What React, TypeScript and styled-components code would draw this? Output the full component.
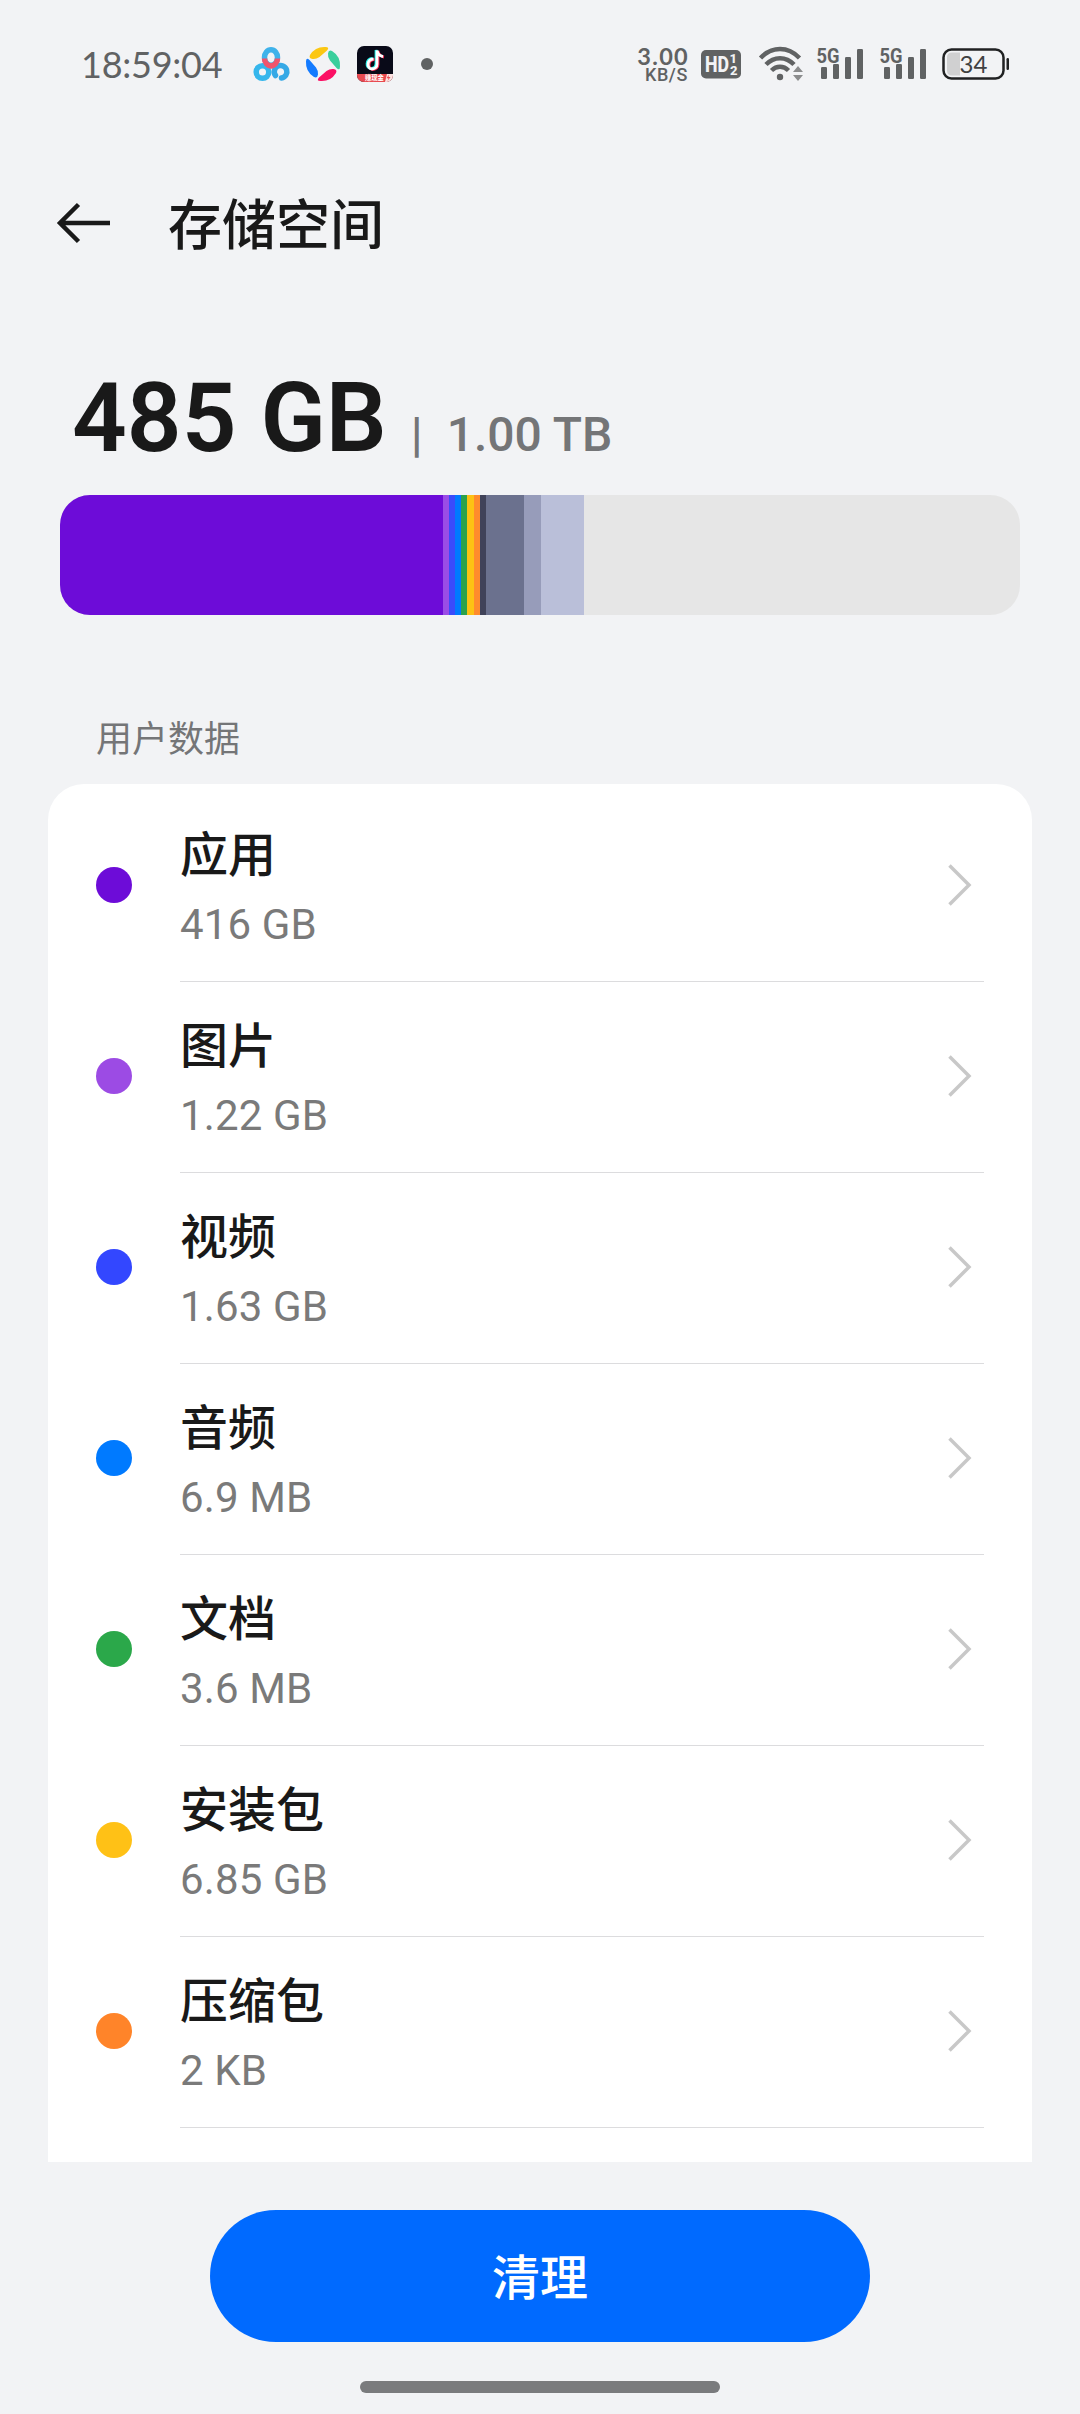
import React from "react";
import styled, { createGlobalStyle } from "styled-components";

const latin = `Roboto, "Noto Sans CJK SC", sans-serif`;

const GlobalStyle = createGlobalStyle`
  * { box-sizing: border-box; }
  body { margin: 0; background: #f2f3f5; font-family: ${latin}; color: #191919; }
`;

const Screen = styled.main`
  width: 1080px;
  height: 2414px;
  display: flex;
  flex-direction: column;
  background: #f2f3f5;
  overflow: hidden;
`;

const StatusBar = styled.header`
  height: 128px;
  flex: none;
  display: flex;
  justify-content: space-between;
  align-items: center;
  padding: 0 70px 0 81px;
`;

const StatusGroup = styled.div`
  display: flex;
  align-items: center;
`;

const Clock = styled.time`
  width: 172px;
  font: 400 36px/44px Lato, sans-serif;
  letter-spacing: -0.25px;
  color: #606263;
`;

const Glyph = styled.svg<{ $gap?: number }>`
  display: block;
  flex: none;
  margin-left: ${(p) => p.$gap ?? 0}px;
  overflow: visible;
`;

const Speed = styled.div`
  width: 52px;
  display: flex;
  flex-direction: column;
  align-items: flex-end;
  color: #606263;
`;

const SpeedValue = styled.span`
  font: 700 23.5px/20px Lato, sans-serif;
  letter-spacing: 1.3px;
`;

const SpeedUnit = styled.span`
  font: 500 18px/17px Roboto, sans-serif;
  letter-spacing: 0.6px;
  padding-right: 1px;
`;

const TitleBar = styled.div`
  height: 194px;
  flex: none;
  display: flex;
  align-items: flex-start;
  padding: 64px 0 0 57px;
`;

const Title = styled.h1`
  margin: -5px 0 0 57px;
  font-size: 54px;
  line-height: 80px;
  font-weight: 500;
`;

const Usage = styled.div`
  height: 173px;
  flex: none;
  display: flex;
  align-items: baseline;
  padding: 40px 0 0 72px;
  line-height: 113px;
`;

const Used = styled.strong`
  font-size: 96px;
  font-weight: 600;
`;

const Total = styled.span<{ $gap: number }>`
  margin-left: ${(p) => p.$gap}px;
  font-size: 48px;
  font-weight: 500;
  color: #747577;
`;

const Meter = styled.div`
  height: 120px;
  flex: none;
  display: flex;
  margin: 0 60px;
  border-radius: 30px;
  overflow: hidden;
  background: #e6e6e6;
`;

const Segment = styled.div<{ $color: string; $w: number }>`
  width: ${(p) => p.$w}px;
  background: ${(p) => p.$color};
`;

const SectionTitle = styled.h2`
  height: 169px;
  flex: none;
  margin: 0;
  padding: 98px 0 0 96px;
  font-size: 36px;
  line-height: 54px;
  font-weight: 400;
  color: #747577;
`;

const Card = styled.ul`
  height: 1378px;
  flex: none;
  list-style: none;
  margin: 0 48px;
  padding: 6px 48px 0;
  border-radius: 36px 36px 0 0;
  background: #fff;
`;

const Row = styled.li`
  height: 191px;
  display: flex;
  align-items: center;
`;

const Dot = styled.span<{ $color: string }>`
  width: 36px;
  height: 36px;
  margin-bottom: 2px;
  border-radius: 50%;
  background: ${(p) => p.$color};
`;

const RowBody = styled.div`
  flex: 1;
  height: 192px;
  margin-left: 48px;
  display: flex;
  align-items: center;
  justify-content: space-between;
  padding-right: 12px;
  border-bottom: 1px solid #dcdcde;
`;

const Labels = styled.div`
  display: flex;
  flex-direction: column;
  padding-top: 9px;
`;

const Name = styled.span`
  font-size: 48px;
  line-height: 70px;
  font-weight: 500;
`;

const Size = styled.span`
  font-size: 42px;
  line-height: 67px;
  letter-spacing: 0.15px;
  color: #7a7a7a;
`;

const Footer = styled.footer`
  flex: 1;
  display: flex;
  flex-direction: column;
  align-items: center;
  padding-top: 48px;
`;

const CleanButton = styled.button`
  width: 660px;
  height: 132px;
  border: 0;
  border-radius: 66px;
  padding: 6px 0 0;
  background: #006aff;
  color: #fff;
  font: 500 48px/72px ${latin};
`;

const HomeIndicator = styled.div`
  width: 360px;
  height: 12px;
  margin-top: 39px;
  border-radius: 6px;
  background: #7a7b7d;
`;

const segments: [string, number][] = [
  ["#6d0cd8", 383], ["#9a4de6", 6], ["#3b4bfb", 6], ["#007aff", 6], ["#2ba24c", 6],
  ["#fdc113", 7], ["#ff8b2c", 6], ["#404259", 6], ["#6b718e", 38], ["#979cba", 17], ["#babfd9", 43],
];

const rows = [
  { name: "应用", size: "416 GB", color: "#6d0cd8" },
  { name: "图片", size: "1.22 GB", color: "#9c4be4" },
  { name: "视频", size: "1.63 GB", color: "#3347ff" },
  { name: "音频", size: "6.9 MB", color: "#007aff" },
  { name: "文档", size: "3.6 MB", color: "#2ba84a" },
  { name: "安装包", size: "6.85 GB", color: "#ffc116" },
  { name: "压缩包", size: "2 KB", color: "#ff8429" },
];

const petal = "M5 9A17 17 0 0 1 20.500 1Q25 1 22 4.500L14.500 11Q11 13.500 7.500 13Q3.500 12.500 5 9z";
const petals: [string, number][] = [["#fbc713", 0], ["#3acf9c", 90], ["#fb1064", 180], ["#147bff", 270]];

const Signal = ({ gap }: { gap: number }) => (
  <Glyph $gap={gap} width="47" height="34" viewBox="0 0 47 34" fill="#606263">
    <text x="-0.500" y="15.500" fontFamily="Roboto" fontWeight="700" fontSize="20.500" textLength="23" lengthAdjust="spacingAndGlyphs">5G</text>
    <rect x="4" y="20" width="6" height="12" rx="1.300" />
    <rect x="16" y="17" width="6" height="15" rx="1.300" />
    <rect x="28" y="10" width="6" height="22" rx="1.300" />
    <rect x="40" y="2" width="6" height="30" rx="1.300" />
  </Glyph>
);

export default function App() {
  return (
    <>
      <GlobalStyle />
      <Screen>
        <StatusBar>
          <StatusGroup>
            <Clock>18:59:04</Clock>
            <Glyph width="36" height="36" viewBox="0 0 36 36" fill="none" strokeWidth="5.500">
              <circle cx="9.500" cy="26" r="6.300" stroke="#35b6ec" />
              <path d="M22.500 29.500A6.300 6.300 0 1 1 28.500 32" stroke="#35a9e6" strokeLinecap="round" />
              <ellipse cx="18" cy="11.500" rx="6.500" ry="7.700" stroke="#3fb2ea" />
              <path d="M11.500 12.500C11.500 17 15 19.500 18 20c3-.5 6.500-3 6.500-7.500" stroke="#f0556c" />
            </Glyph>
            <Glyph $gap={16} width="36" height="36" viewBox="0 0 36 36">
              {petals.map(([color, turn]) => (
                <path key={color} d={petal} fill={color} transform={`rotate(${turn} 18 18)`} />
              ))}
            </Glyph>
            <Glyph $gap={16} width="36" height="36" viewBox="0 0 36 36">
              <rect width="36" height="36" rx="7" fill="#090a18" />
              <path d="M0 28h36v1a7 7 0 0 1-7 7H7a7 7 0 0 1-7-7z" fill="#e84950" />
              <path d="M30 28h6v1a7 7 0 0 1-7 7h-1z" fill="#fbe3e2" />
              <path d="M32 28.500l-2.500 3.800h2l-1 2.700 3-4h-2z" fill="#e84950" />
              <g fill="none" strokeWidth="2.800">
                <path d="M15.500 12.500c-7 0-7 10-1.500 10 3 0 5-2 5-5V4c1 4 3 5.500 6 6" stroke="#25f4ee" />
                <path d="M17.500 13.500c-7 0-7 10-1.500 10 3 0 5-2 5-5V5c1 4 3 5.500 6 6" stroke="#fe2c55" />
                <path d="M16.500 13c-7 0-7 10-1.500 10 3 0 5-2 5-5V4.500c1 4 3 5.500 6 6" stroke="#fff" />
              </g>
              <text x="8" y="34.300" fontSize="6.300" fontWeight="700" fill="#fff" fontFamily="Noto Sans CJK SC">赚现金</text>
            </Glyph>
            <Glyph $gap={28} width="12" height="12" viewBox="0 0 12 12">
              <circle cx="6" cy="6" r="6" fill="#606263" />
            </Glyph>
          </StatusGroup>
          <StatusGroup>
            <Speed>
              <SpeedValue>3.00</SpeedValue>
              <SpeedUnit>KB/S</SpeedUnit>
            </Speed>
            <Glyph $gap={12} width="40" height="28" viewBox="0 0 40 28">
              <rect width="40" height="28.500" rx="5" fill="#606263" />
              <g fill="#f2f3f5" fontFamily="Roboto" fontWeight="800">
                <text x="4" y="21.500" fontSize="21.500" textLength="24" lengthAdjust="spacingAndGlyphs">HD</text>
                <text x="28.500" y="13" fontSize="13">1</text>
                <text x="29" y="25" fontSize="13">2</text>
              </g>
            </Glyph>
            <Glyph $gap={18} width="45" height="34" viewBox="0 0 45 34">
              <g fill="none" stroke="#606263" strokeWidth="4.500">
                <path d="M1.500 11C13-1 29-1 40.500 11" />
                <path d="M7 17.500c8-8.500 20-8.500 28 0" />
                <path d="M12.500 23.500c5-5 12-5 17 0" />
              </g>
              <circle cx="21" cy="30" r="3.200" fill="#606263" />
              <path d="M34 25l5-6 5 6zM34 28h10l-5 6z" fill="#8b8c8d" />
            </Glyph>
            <Signal gap={13} />
            <Signal gap={16} />
            <Glyph $gap={15} width="68" height="32" viewBox="0 0 68 32">
              <rect x="1.500" y="1.500" width="60" height="29" rx="8" fill="none" stroke="#202122" strokeWidth="2.500" />
              <path d="M18 4.500H10q-5 0-5 5v13q0 5 5 5h8z" fill="#d0d0d1" />
              <text x="31.500" y="24.500" textAnchor="middle" fontFamily="Lato" fontSize="24" fill="#404142">34</text>
              <rect x="64.500" y="10" width="2.500" height="12" rx="1.200" fill="#202122" />
            </Glyph>
          </StatusGroup>
        </StatusBar>

        <TitleBar>
          <Glyph width="54" height="64" viewBox="0 0 54 64" fill="none" stroke="#191919" strokeWidth="4.500">
            <path d="M21.500 12.500L3 31l18.500 18.500M3 31h50" />
          </Glyph>
          <Title>存储空间</Title>
        </TitleBar>

        <Usage>
          <Used>485 GB</Used>
          <Total $gap={24}>|</Total>
          <Total $gap={24}>1.00 TB</Total>
        </Usage>

        <Meter>
          {segments.map(([color, w]) => (
            <Segment key={color} $color={color} $w={w} />
          ))}
        </Meter>

        <SectionTitle>用户数据</SectionTitle>
        <Card>
          {rows.map((row) => (
            <Row key={row.name}>
              <Dot $color={row.color} />
              <RowBody>
                <Labels>
                  <Name>{row.name}</Name>
                  <Size>{row.size}</Size>
                </Labels>
                <Glyph width="24" height="44" viewBox="0 0 24 44" fill="none" stroke="#c8c8c8" strokeWidth="3.500">
                  <path d="M1.500 2.500L21 22 1.500 41.500" />
                </Glyph>
              </RowBody>
            </Row>
          ))}
        </Card>

        <Footer>
          <CleanButton>清理</CleanButton>
          <HomeIndicator />
        </Footer>
      </Screen>
    </>
  );
}
